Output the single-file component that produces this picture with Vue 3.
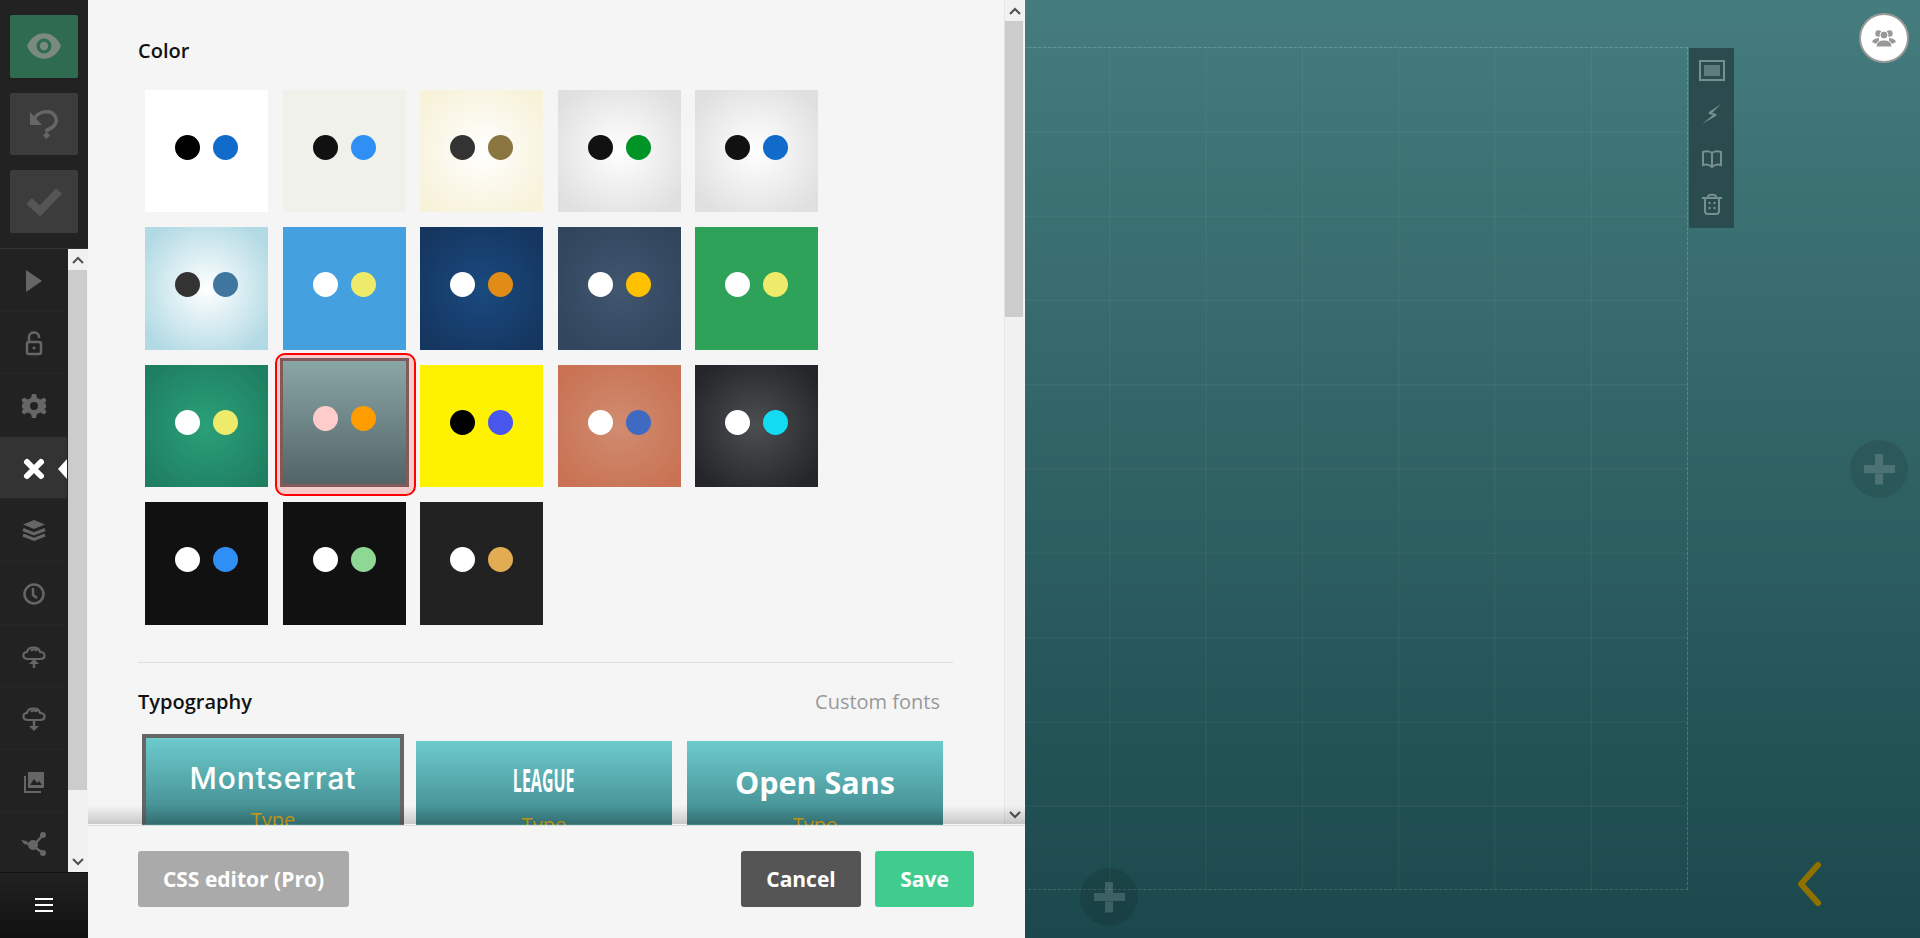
<template>
  <div class="app">
    <aside class="sidebar">
      <div class="top-actions">
        <button class="top-btn green">
          <svg width="36" height="28" viewBox="0 0 36 28">
            <path d="M1 14 C8 -3 28 -3 35 14 C28 31 8 31 1 14 Z" fill="#7b8a80" />
            <circle cx="18" cy="14" r="7.5" fill="#2f6b51" />
            <circle cx="18" cy="14" r="4.2" fill="#7b8a80" />
          </svg>
        </button>
        <button class="top-btn">
          <svg width="34" height="38" viewBox="0 0 34 38">
            <path d="M7 14 C11 6 24 4 28 11 C32 18 26 23 20 25 L19.5 27" fill="none" stroke="#666" stroke-width="3.5" />
            <path d="M3 7 L3 20 L15 20 Z" fill="#666" />
            <rect x="17" y="28" width="5" height="5" transform="rotate(45 19.5 30.5)" fill="#666" />
          </svg>
        </button>
        <button class="top-btn">
          <svg width="36" height="30" viewBox="0 0 36 30">
            <path d="M3 15 L14 25 L33 5" fill="none" stroke="#555" stroke-width="8" />
          </svg>
        </button>
      </div>
      <div class="menu-wrap">
        <ul class="menu">
          <li v-for="item in menuItems" :key="item" class="menu-item" :class="{ active: item === 'close' }">
            <svg width="30" height="30" viewBox="0 0 30 30" class="menu-icon">
              <path v-if="item === 'play'" d="M7 4 L23 15 L7 26 Z" fill="#666" />
              <g v-else-if="item === 'lock'">
                <path d="M10 14 V9 C10 3 20 3 20 9 V10" fill="none" stroke="#666" stroke-width="2.5" />
                <rect x="8" y="14" width="14" height="12" rx="2" fill="none" stroke="#666" stroke-width="2.5" />
                <circle cx="15" cy="20" r="1.5" fill="#666" />
              </g>
              <g v-else-if="item === 'gear'">
                <path d="M13 3 H17 L18 7 L21.5 8.5 L25 6.5 L27.5 9 L25.5 12.5 L27 13 L27 17 L25.5 17.5 L27.5 21 L25 23.5 L21.5 21.5 L18 23 L17 27 H13 L12 23 L8.5 21.5 L5 23.5 L2.5 21 L4.5 17.5 L3 17 V13 L4.5 12.5 L2.5 9 L5 6.5 L8.5 8.5 L12 7 Z" fill="#666" />
                <circle cx="15" cy="15" r="4" fill="#222" />
              </g>
              <path v-else-if="item === 'close'" d="M8 8 L22 22 M22 8 L8 22" stroke="#fff" stroke-width="6" stroke-linecap="round" />
              <g v-else-if="item === 'layers'">
                <path d="M15 4 L26 8.5 L15 13 L4 8.5 Z" fill="#666" />
                <path d="M4 13.5 L15 18 L26 13.5 M4 19 L15 23.5 L26 19" fill="none" stroke="#666" stroke-width="3" />
              </g>
              <g v-else-if="item === 'clock'">
                <circle cx="15" cy="15" r="9.5" fill="none" stroke="#666" stroke-width="2.5" />
                <path d="M14 9 V16 L18 19" fill="none" stroke="#666" stroke-width="2.5" />
              </g>
              <g v-else-if="item === 'up'">
                <path d="M9 18 C3 18 3 11 8 11 C9 5 20 5 21 11 C27 11 27 18 21 18 Z M12 10 C13 8 17 8 18 10" fill="none" stroke="#666" stroke-width="2.2" />
                <path d="M15 18 V27" stroke="#666" stroke-width="2.5" />
                <path d="M10 23 L15 18 L20 23 Z" fill="#666" />
              </g>
              <g v-else-if="item === 'down'">
                <path d="M9 16 C3 16 3 9 8 9 C9 3 20 3 21 9 C27 9 27 16 21 16 Z M12 8 C13 6 17 6 18 8" fill="none" stroke="#666" stroke-width="2.2" />
                <path d="M15 16 V23" stroke="#666" stroke-width="2.5" />
                <path d="M10 22 L15 27 L20 22 Z" fill="#666" />
              </g>
              <g v-else-if="item === 'image'">
                <path d="M6 9 V25 H22" fill="none" stroke="#666" stroke-width="2" />
                <rect x="9" y="5" width="16" height="16" rx="1" fill="#666" />
                <path d="M11 18 L15 12 L18 16 L20 14 L23 18 Z" fill="#222" />
              </g>
              <g v-else>
                <path d="M5 13 L14 17 L24 6 M14 17 L24 24" fill="none" stroke="#666" stroke-width="2.5" />
                <circle cx="14" cy="16" r="5" fill="#666" />
                <circle cx="24" cy="6" r="3" fill="#666" />
                <circle cx="24" cy="24" r="3" fill="#666" />
                <path d="M2 11 L8 12 L6 16 Z" fill="#666" />
              </g>
            </svg>
            <span v-if="item === 'close'" class="pointer"></span>
          </li>
        </ul>
        <div class="side-rail">
          <div class="rail-btn">
            <svg width="12" height="8" viewBox="0 0 12 8"><path d="M1 7 L6 2 L11 7" fill="none" stroke="#505050" stroke-width="2" /></svg>
          </div>
          <div class="rail-thumb"></div>
          <div class="rail-btn end">
            <svg width="12" height="8" viewBox="0 0 12 8"><path d="M1 1 L6 6 L11 1" fill="none" stroke="#505050" stroke-width="2" /></svg>
          </div>
        </div>
      </div>
      <div class="menu-toggle">
        <span></span><span></span><span></span>
      </div>
    </aside>

    <section class="panel">
      <div class="panel-body">
        <div class="panel-content">
          <h3 class="heading color-heading">Color</h3>
          <div class="swatches">
            <div v-for="(s, i) in swatches" :key="i" class="swatch-cell" :class="{ selected: s.selected }">
              <div class="swatch" :style="{ background: s.bg }">
                <span class="dot" :style="{ background: s.a }"></span>
                <span class="dot" :style="{ background: s.b }"></span>
              </div>
            </div>
          </div>
          <div class="divider"></div>
          <div class="type-head">
            <h3 class="heading">Typography</h3>
            <span class="custom">Custom fonts</span>
          </div>
          <div class="fonts">
            <div class="font-card current">
              <div class="font-name montserrat">Montserrat</div>
              <div class="font-type">Type</div>
            </div>
            <div class="font-card">
              <div class="font-name league"><span>LEAGUE</span></div>
              <div class="font-type">Type</div>
            </div>
            <div class="font-card">
              <div class="font-name opensans">Open Sans</div>
              <div class="font-type">Type</div>
            </div>
          </div>
        </div>
        <div class="panel-rail">
          <div class="rail-btn">
            <svg width="12" height="8" viewBox="0 0 12 8"><path d="M1 7 L6 2 L11 7" fill="none" stroke="#505050" stroke-width="2" /></svg>
          </div>
          <div class="rail-thumb"></div>
          <div class="rail-btn end">
            <svg width="12" height="8" viewBox="0 0 12 8"><path d="M1 1 L6 6 L11 1" fill="none" stroke="#505050" stroke-width="2" /></svg>
          </div>
        </div>
        <div class="panel-shadow"></div>
      </div>
      <footer class="panel-footer">
        <button class="btn css">CSS editor (Pro)</button>
        <div class="footer-right">
          <button class="btn cancel">Cancel</button>
          <button class="btn save">Save</button>
        </div>
      </footer>
    </section>

    <main class="canvas">
      <div class="frame"></div>

      <div class="toolbar">
        <div class="tool">
          <svg width="26" height="21" viewBox="0 0 26 21">
            <rect x="1" y="1" width="24" height="19" fill="none" stroke="#76908f" stroke-width="2" />
            <rect x="5" y="5" width="16" height="11" fill="#5f7c7c" />
          </svg>
        </div>
        <div class="tool">
          <svg width="20" height="20" viewBox="0 0 20 20">
            <path d="M19 0 L7 8 L6.5 10 L11 11 L0 20 L14 12 L14.5 10 L10 9 Z" fill="#76908f" />
          </svg>
        </div>
        <div class="tool">
          <svg width="22" height="20" viewBox="0 0 22 20">
            <path d="M11 4 C8 2 5 2 2 3 V16 C5 15 8 15 11 18 C14 15 17 15 20 16 V3 C17 2 14 2 11 4 Z M11 4 V18" fill="none" stroke="#76908f" stroke-width="2" />
          </svg>
        </div>
        <div class="tool">
          <svg width="22" height="22" viewBox="0 0 22 22">
            <path d="M1 5 H21 M7 4 C7 1 15 1 15 4" fill="none" stroke="#76908f" stroke-width="2" />
            <path d="M4 6 V18 C4 20 5 21 7 21 H15 C17 21 18 20 18 18 V6" fill="none" stroke="#76908f" stroke-width="2" />
            <g fill="#76908f">
              <circle cx="8.5" cy="10" r="1.2" /><circle cx="13.5" cy="10" r="1.2" />
              <circle cx="8.5" cy="15" r="1.2" /><circle cx="13.5" cy="15" r="1.2" />
            </g>
          </svg>
        </div>
      </div>

      <div class="avatar">
        <svg width="24" height="18" viewBox="0 0 24 18" fill="#999">
          <circle cx="6.5" cy="4.5" r="3.2" /><circle cx="17.5" cy="4.5" r="3.2" />
          <path d="M0 13 C1 10 4 9 7 9 L7 13 L4 15 Z M24 13 C23 10 20 9 17 9 L17 13 L20 15 Z" />
          <circle cx="12" cy="6" r="4" stroke="#fff" stroke-width="1" />
          <path d="M4 18 C4 12 9 11 12 11 C15 11 20 12 20 18 Z" stroke="#fff" stroke-width="1" />
        </svg>
      </div>

      <div class="add-btn add-right"><span class="plus"></span></div>
      <div class="add-btn add-bottom"><span class="plus"></span></div>

      <svg class="chevron" width="30" height="52" viewBox="0 0 30 52">
        <path d="M23 7 L6 26 L23 45" fill="none" stroke="#8f7000" stroke-width="6" stroke-linecap="round" stroke-linejoin="round" />
      </svg>
    </main>
  </div>
</template>

<script setup>
const menuItems = ['play', 'lock', 'gear', 'close', 'layers', 'clock', 'up', 'down', 'image', 'share']

const radial = (from, to) => `radial-gradient(circle at 50% 50%, ${from} 0%, ${to} 85%)`

const swatches = [
  { bg: '#fff', a: '#000', b: '#116bcb' },
  { bg: '#f0f1eb', a: '#111', b: '#2f8ff5' },
  { bg: radial('#fff', '#f7f2d9'), a: '#333', b: '#8b7540' },
  { bg: radial('#fff', '#e0e0e0'), a: '#111', b: '#009426' },
  { bg: radial('#fff', '#e0e0e0'), a: '#111', b: '#116bcb' },
  { bg: radial('#fff', '#b2dae4'), a: '#333', b: '#3f76a0' },
  { bg: '#44a0de', a: '#fff', b: '#eeeb6a' },
  { bg: radial('#1a4a80', '#153660'), a: '#fff', b: '#e08c16' },
  { bg: radial('#41566f', '#31465d'), a: '#fff', b: '#ffc000' },
  { bg: '#2ea259', a: '#fff', b: '#eeeb6a' },
  { bg: radial('#2aa079', '#1f8061'), a: '#fff', b: '#eeeb6a' },
  { bg: 'linear-gradient(#8aa6a6, #526466)', a: '#ffcccc', b: '#ff9c00', selected: true },
  { bg: '#fff200', a: '#000', b: '#4a57ee' },
  { bg: radial('#d08c70', '#c97354'), a: '#fff', b: '#3e6ac2' },
  { bg: radial('#4c4f52', '#25262a'), a: '#fff', b: '#13dcf2' },
  { bg: '#111', a: '#fff', b: '#2f8ff5' },
  { bg: '#111', a: '#fff', b: '#8fd795' },
  { bg: '#222', a: '#fff', b: '#e2ac53' }
]
</script>

<style>
html, body {
  margin: 0;
  overflow: hidden;
}
</style>

<style scoped>
.app {
  display: flex;
  width: 1920px;
  height: 938px;
  overflow: hidden;
  font-family: "Open Sans", "Liberation Sans", sans-serif;
}

/* left bar */
.sidebar {
  width: 88px;
  flex-shrink: 0;
  display: flex;
  flex-direction: column;
  background: #222;
}
.top-actions {
  height: 249px;
  box-sizing: border-box;
  padding: 15px 10px 0;
  display: flex;
  flex-direction: column;
  gap: 15px;
  border-bottom: 1px solid #333;
  flex-shrink: 0;
}
.top-btn {
  height: 62.6px;
  width: 68px;
  padding: 0;
  border: none;
  border-radius: 2px;
  background: #3c3c3c;
  display: flex;
  align-items: center;
  justify-content: center;
}
.top-btn.green {
  background: #2f6b51;
}
.menu-wrap {
  display: flex;
  height: 623px;
  flex-shrink: 0;
}
.menu {
  list-style: none;
  margin: 0;
  padding: 0;
  width: 67px;
  overflow: hidden;
  flex-shrink: 0;
}
.menu-item {
  position: relative;
  height: 62.6px;
  display: flex;
  align-items: center;
  justify-content: center;
  box-sizing: border-box;
  border-bottom: 1px solid #262626;
}
.menu-icon {
  margin-top: 2px;
}
.menu-item.active {
  background: #333;
}
.pointer {
  position: absolute;
  right: 0;
  top: 50%;
  margin-top: -9px;
  border: 10px solid transparent;
  border-left: none;
  border-right-color: #fff;
  border-right-width: 9px;
}
.side-rail {
  width: 20px;
  margin-left: 1px;
  display: flex;
  flex-direction: column;
  background: #f1f1f1;
}
.rail-btn {
  height: 21px;
  display: flex;
  align-items: center;
  justify-content: center;
  flex-shrink: 0;
}
.rail-thumb {
  background: #ccc;
  margin-right: 1px;
}
.side-rail .rail-thumb {
  height: 520px;
}
.side-rail .rail-btn.end {
  margin-top: auto;
}
.menu-toggle {
  flex: 1;
  box-sizing: border-box;
  display: flex;
  flex-direction: column;
  align-items: center;
  justify-content: center;
  gap: 4px;
  padding-bottom: 2px;
  background: linear-gradient(#222, #111);
  border-top: 1px solid #111;
}
.menu-toggle span {
  width: 18px;
  height: 2px;
  background: #fff;
}

/* settings panel */
.panel {
  width: 937px;
  flex-shrink: 0;
  display: flex;
  flex-direction: column;
  background: #f5f5f5;
  position: relative;
  z-index: 2;
}
.panel-body {
  position: relative;
  height: 825px;
  display: flex;
  overflow: hidden;
  flex-shrink: 0;
}
.panel-content {
  width: 916px;
  flex-shrink: 0;
  box-sizing: border-box;
  padding: 0 0 0 50px;
}
.heading {
  margin: 0;
  font-size: 20px;
  font-weight: 600;
  line-height: 24px;
  color: #111;
}
.color-heading {
  padding-top: 39px;
}
.swatches {
  margin: 27px 0 0 7px;
  display: grid;
  grid-template-columns: repeat(5, 123px);
  grid-template-rows: 122px 123px 122px 123px;
  column-gap: 14.5px;
  row-gap: 15px;
}
.swatch-cell {
  position: relative;
}
.swatch {
  height: 100%;
  box-sizing: border-box;
  padding-top: 45px;
  display: flex;
  justify-content: center;
  gap: 13px;
}
.dot {
  width: 25px;
  height: 25px;
  border-radius: 50%;
}
.selected .swatch {
  position: absolute;
  left: -3px;
  right: -3px;
  top: -7px;
  bottom: 0;
  height: auto;
  background-clip: padding-box;
  border: 3px solid #835a5a;
  padding-top: 45px;
}
.selected::before {
  content: "";
  position: absolute;
  left: -8px;
  right: -10px;
  top: -12px;
  bottom: -9px;
  border: 2px solid #f00;
  border-radius: 10px;
  background: #f7cbcb;
}
.divider {
  width: 815px;
  height: 1px;
  background: #ddd;
  margin-top: 37px;
}
.type-head {
  width: 802px;
  display: flex;
  justify-content: space-between;
  align-items: center;
  margin-top: 27px;
}
.custom {
  font-size: 20px;
  line-height: 24px;
  color: #999;
}
.fonts {
  display: flex;
  align-items: flex-start;
  margin: 20px 0 0 4px;
}
.font-card {
  width: 256px;
  height: 152px;
  margin: 7px 15px 0 0;
  flex-shrink: 0;
  box-sizing: border-box;
  background: linear-gradient(#6dcbcd, #2f6f73 112px);
  text-align: center;
  color: #fff;
}
.font-card.current {
  width: 262px;
  margin: 0 12px 0 0;
  border: 4px solid #666;
}
.font-name {
  height: 72px;
  display: flex;
  align-items: center;
  justify-content: center;
  white-space: nowrap;
  box-sizing: border-box;
}
.montserrat {
  font-family: Inter, "Open Sans", sans-serif;
  font-size: 30px;
  font-weight: 500;
  letter-spacing: 0.9px;
  height: 70px;
  padding-top: 10px;
}
.league {
  padding-top: 6px;
  font-size: 32px;
  font-weight: 700;
  line-height: 1;
}
.league span {
  transform: scaleX(0.5);
}
.opensans {
  font-size: 30.5px;
  font-weight: 700;
  padding-top: 10px;
}
.font-type {
  font-size: 20px;
  line-height: 24px;
  color: #dba80f;
}
.panel-rail {
  width: 20px;
  display: flex;
  flex-direction: column;
  background: #f1f1f1;
  flex-shrink: 0;
  box-sizing: border-box;
  border-left: 1px solid #e4e4e4;
}
.panel-rail .rail-thumb {
  height: 296px;
}
.panel-rail .rail-btn.end {
  margin-top: auto;
}
.panel-shadow {
  position: absolute;
  left: 0;
  right: 0;
  bottom: 1px;
  height: 19px;
  background: linear-gradient(rgba(0, 0, 0, 0), rgba(0, 0, 0, 0.18));
}
.panel-footer {
  flex: 1;
  box-sizing: border-box;
  border-top: 1px solid #ddd;
  padding: 25px 51px 0 50px;
  display: flex;
  justify-content: space-between;
  align-items: flex-start;
}
.footer-right {
  display: flex;
  gap: 14px;
}
.btn {
  height: 56px;
  border: none;
  border-radius: 3px;
  color: #fff;
  font-family: inherit;
  font-size: 21px;
  font-weight: 700;
  padding: 0;
}
.css {
  width: 211px;
  background: #aaa;
}
.cancel {
  width: 120px;
  background: #555;
}
.save {
  width: 99px;
  background: #41cc8f;
}

/* page canvas */
.canvas {
  flex: 1;
  position: relative;
  overflow: hidden;
  padding-top: 47px;
  background: linear-gradient(#457c7d, #1b484c);
}
.frame {
  width: 675px;
  height: 843px;
  margin-left: -12px;
  box-sizing: border-box;
  border: 1px dashed rgba(255, 255, 255, 0.15);
  background-image:
    linear-gradient(to right, transparent calc(100% - 1px), rgba(255, 255, 255, 0.055) calc(100% - 1px)),
    linear-gradient(to bottom, transparent calc(100% - 1px), rgba(255, 255, 255, 0.055) calc(100% - 1px));
  background-size: 96.3px 84.3px;
}
.toolbar {
  position: absolute;
  left: 664px;
  top: 48px;
  width: 45px;
  background: #2b4c4e;
}
.tool {
  height: 45px;
  display: flex;
  align-items: center;
  justify-content: center;
}
.tool + .tool svg {
  margin-top: -3px;
}
.avatar {
  position: absolute;
  left: 834px;
  top: 13px;
  width: 50px;
  height: 50px;
  box-sizing: border-box;
  border: 2px solid #999;
  border-radius: 50%;
  background: #fff;
  display: flex;
  align-items: center;
  justify-content: center;
}
.add-btn {
  position: absolute;
  width: 58px;
  height: 58px;
  border-radius: 50%;
  background: rgba(0, 0, 0, 0.1);
  display: flex;
  align-items: center;
  justify-content: center;
}
.add-right {
  left: 825px;
  top: 440px;
}
.add-bottom {
  left: 55px;
  top: 868px;
}
.plus {
  position: relative;
  width: 31px;
  height: 8px;
  background: rgba(255, 255, 255, 0.16);
}
.plus::before {
  content: "";
  position: absolute;
  left: 11.5px;
  top: -11.5px;
  width: 8px;
  height: 11.5px;
  background: rgba(255, 255, 255, 0.16);
  box-shadow: 0 19.5px 0 rgba(255, 255, 255, 0.16);
}
.chevron {
  position: absolute;
  left: 770px;
  top: 858px;
}
</style>
